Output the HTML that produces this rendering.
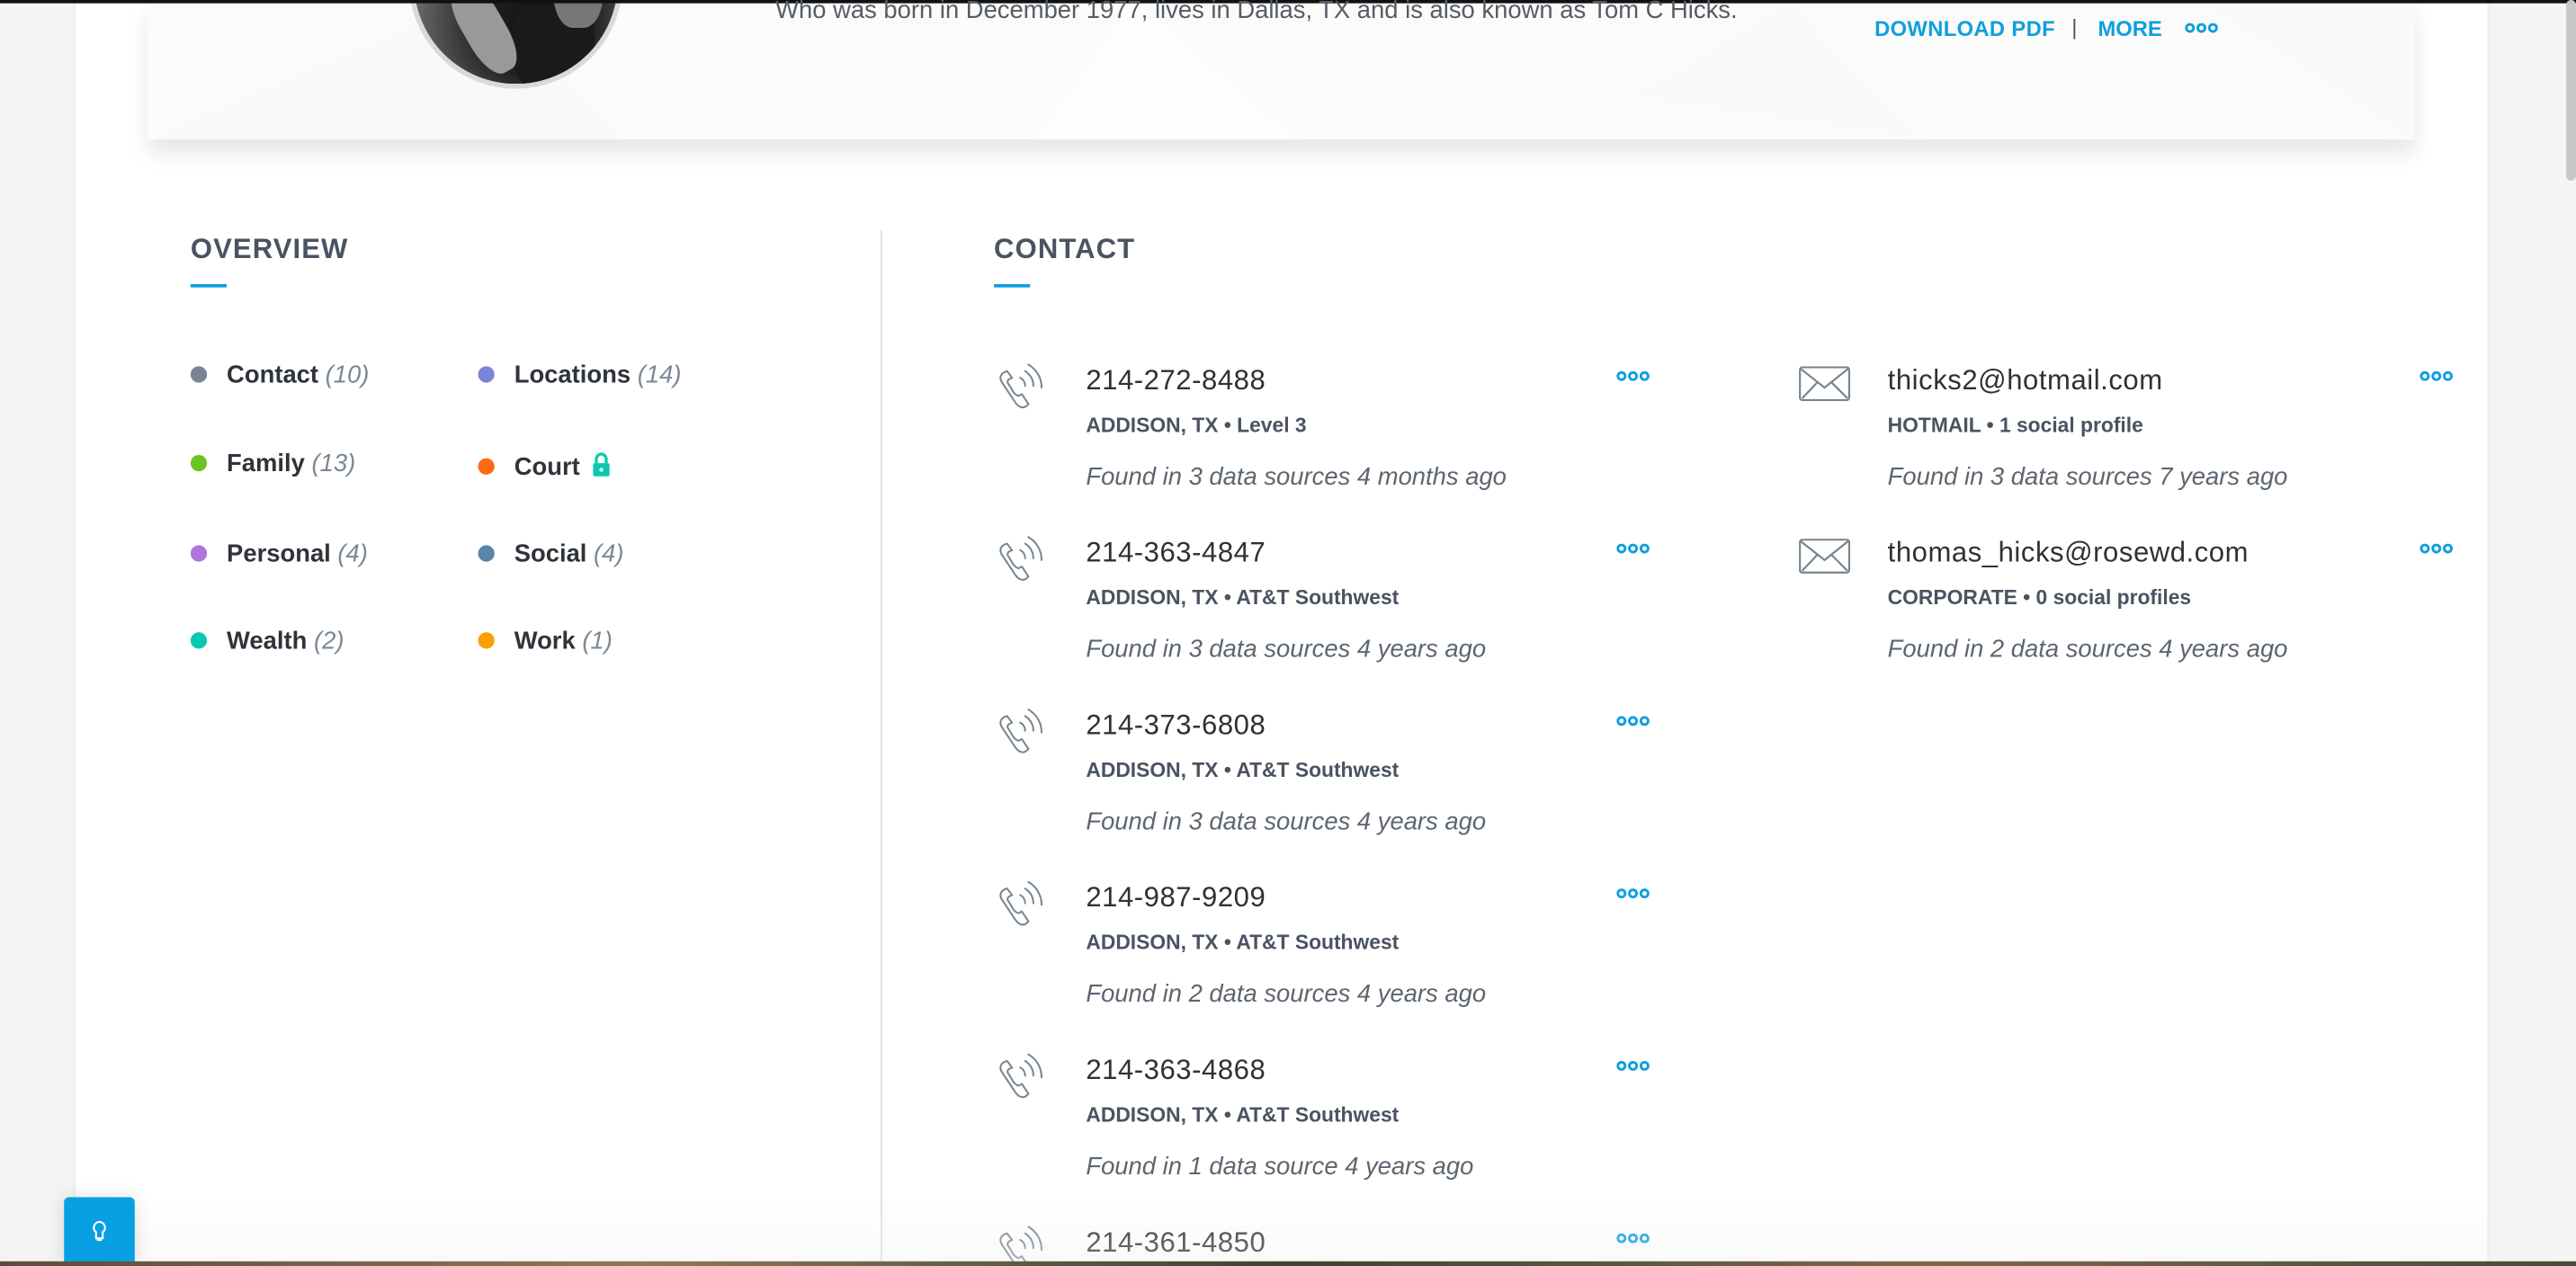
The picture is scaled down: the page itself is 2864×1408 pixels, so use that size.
<!DOCTYPE html>
<html><head><meta charset="utf-8">
<style>
html,body{margin:0;padding:0;width:2864px;height:1408px;overflow:hidden;background:#f4f4f4;}
#s{position:absolute;left:0;top:0;width:1568px;height:771px;transform:scale(1.826531);transform-origin:0 0;font-family:"Liberation Sans",sans-serif;background:#f4f4f4;overflow:hidden;}
.a{position:absolute;white-space:nowrap;}
.panel{position:absolute;left:46px;top:0;width:1468px;height:771px;background:#fff;box-shadow:0 0 3px rgba(0,0,0,.06);}
.card{position:absolute;left:90px;top:0;width:1380px;height:85px;background:#fbfbfa;box-shadow:0 8px 12px rgba(0,0,0,.10);overflow:hidden;}
.blue{color:#0e9fe0;}
.h{font-size:17px;font-weight:bold;color:#4a5361;letter-spacing:.6px;}
.ul{position:absolute;width:22px;height:2px;background:#0e9fe0;}
.dot{position:absolute;width:10px;height:10px;border-radius:50%;}
.lab{font-size:15px;font-weight:bold;color:#2f343b;}
.cnt{font-style:italic;font-weight:normal;color:#7a8896;}
.num{font-size:17px;color:#2d3237;letter-spacing:.3px;}
.sub{font-size:12.5px;font-weight:bold;color:#4a5361;}
.fnd{font-size:15px;font-style:italic;color:#5d6670;}
.dots{position:absolute;width:22px;height:6px;}
</style></head><body>
<div id="s">
<div class="panel"></div>
<div class="card">
 <svg width="1380" height="85" style="position:absolute;left:0;top:0">
  <polygon points="200,0 290,85 0,85" fill="#f9f9f8"/>
  <polygon points="600,0 700,85 540,85" fill="#fdfdfc"/>
  <polygon points="1000,0 1080,85 900,60" fill="#fafaf9"/>
  <polygon points="1250,0 1380,85 1380,0" fill="#f9f9f9"/>
 </svg>
</div>
<div style="position:absolute;left:249px;top:-76px;width:124px;height:124px;border-radius:50%;border:3px solid #d9d9d9;background:radial-gradient(circle at 60% 70%,#111 0,#222 30%,#555 55%,#888 80%);overflow:hidden;">
 <div style="position:absolute;left:60px;top:70px;width:50px;height:60px;background:#1a1a1a;border-radius:40%;"></div>
 <div style="position:absolute;left:30px;top:60px;width:25px;height:60px;background:#999;transform:rotate(-30deg);border-radius:40%;"></div>
 <div style="position:absolute;left:85px;top:40px;width:30px;height:50px;background:#777;border-radius:40%;"></div>
</div>
<div style="position:absolute;left:0;top:0;width:1568px;height:2px;background:#111;"></div>
<div class="a" style="left:472px;top:-2px;font-size:15px;color:#555c66;">Who was born in December 1977, lives in Dallas, TX and is also known as Tom C Hicks.</div>
<div class="a blue" style="left:1141px;top:10px;font-size:13px;font-weight:bold;letter-spacing:.2px;">DOWNLOAD PDF</div>
<div class="a" style="left:1261px;top:9px;font-size:13px;color:#4a5361;">|</div>
<div class="a blue" style="left:1277px;top:10px;font-size:13px;font-weight:bold;">MORE</div>
<svg class="dots" style="left:1330px;top:14px"><circle cx="3" cy="3" r="2.2" fill="none" stroke="#0e9fe0" stroke-width="1.6"/><circle cx="10" cy="3" r="2.2" fill="none" stroke="#0e9fe0" stroke-width="1.6"/><circle cx="17" cy="3" r="2.2" fill="none" stroke="#0e9fe0" stroke-width="1.6"/></svg>

<div class="a h" style="left:116px;top:142px;">OVERVIEW</div>
<div class="ul" style="left:116px;top:173px"></div>
<div style="position:absolute;left:536px;top:140px;width:1px;height:631px;background:#dedede;"></div>
<div class="a h" style="left:605px;top:142px;">CONTACT</div>
<div class="ul" style="left:605px;top:173px"></div>

<div class="dot" style="left:116px;top:223px;background:#778592"></div><div class="a lab" style="left:138px;top:220px">Contact <span class="cnt">(10)</span></div>
<div class="dot" style="left:291px;top:223px;background:#7b84d9"></div><div class="a lab" style="left:313px;top:220px">Locations <span class="cnt">(14)</span></div>
<div class="dot" style="left:116px;top:277px;background:#6bc424"></div><div class="a lab" style="left:138px;top:274px">Family <span class="cnt">(13)</span></div>
<div class="dot" style="left:291px;top:279px;background:#ff6a13"></div><div class="a lab" style="left:313px;top:276px">Court</div>
<svg class="a" style="left:360px;top:275px" width="12" height="16"><path d="M3 7V4.5a3 3 0 0 1 6 0V7" fill="none" stroke="#08c9b0" stroke-width="1.8"/><rect x="1" y="7" width="10" height="8" rx="1" fill="#08c9b0"/><circle cx="6" cy="11" r="1.2" fill="#fff"/></svg>
<div class="dot" style="left:116px;top:332px;background:#b075dc"></div><div class="a lab" style="left:138px;top:329px">Personal <span class="cnt">(4)</span></div>
<div class="dot" style="left:291px;top:332px;background:#5a84a8"></div><div class="a lab" style="left:313px;top:329px">Social <span class="cnt">(4)</span></div>
<div class="dot" style="left:116px;top:385px;background:#08c9b0"></div><div class="a lab" style="left:138px;top:382px">Wealth <span class="cnt">(2)</span></div>
<div class="dot" style="left:291px;top:385px;background:#fd9f00"></div><div class="a lab" style="left:313px;top:382px">Work <span class="cnt">(1)</span></div>

<svg width="0" height="0" style="position:absolute">
 <defs>
  <g id="ph" fill="none" stroke="#77858f" stroke-width="1.1" stroke-linecap="round">
   <path d="M6 5 C2 6 1 9 3 12 L11 24 C13 27 16 28 18 26 L19 25 L15 19 L13 20 C12 20 11 19 10 18 L7 13 C6 12 6 11 7 10 L9 9 L6 5 Z"/>
   <path d="M14 9 C16 10 17 12 17 14"/>
   <path d="M17 5 C20 7 22 10 22 14"/>
   <path d="M19 1 C24 4 27 9 27 15"/>
  </g>
  <g id="ml" fill="none" stroke="#77858f" stroke-width="1.2">
   <rect x="0.6" y="0.6" width="30" height="20" rx="1.5"/>
   <path d="M1 1.5 L15.6 13 L30 1.5 M2 19.5 L11 10 M29.5 19.5 L20 10"/>
  </g>
  <g id="dd" fill="none" stroke="#0e9fe0" stroke-width="1.6"><circle cx="3" cy="3" r="2.2"/><circle cx="10" cy="3" r="2.2"/><circle cx="17" cy="3" r="2.2"/></g>
 </defs>
</svg>

<svg class="a" style="left:607px;top:221px" width="32" height="30"><use href="#ph"/></svg>
<div class="a num" style="left:661px;top:222px">214-272-8488</div>
<div class="a sub" style="left:661px;top:252px">ADDISON, TX • Level 3</div>
<div class="a fnd" style="left:661px;top:282px">Found in 3 data sources 4 months ago</div>
<svg class="dots" style="left:984px;top:226px"><use href="#dd"/></svg>

<svg class="a" style="left:607px;top:326px" width="32" height="30"><use href="#ph"/></svg>
<div class="a num" style="left:661px;top:327px">214-363-4847</div>
<div class="a sub" style="left:661px;top:357px">ADDISON, TX • AT&amp;T Southwest</div>
<div class="a fnd" style="left:661px;top:387px">Found in 3 data sources 4 years ago</div>
<svg class="dots" style="left:984px;top:331px"><use href="#dd"/></svg>

<svg class="a" style="left:607px;top:431px" width="32" height="30"><use href="#ph"/></svg>
<div class="a num" style="left:661px;top:432px">214-373-6808</div>
<div class="a sub" style="left:661px;top:462px">ADDISON, TX • AT&amp;T Southwest</div>
<div class="a fnd" style="left:661px;top:492px">Found in 3 data sources 4 years ago</div>
<svg class="dots" style="left:984px;top:436px"><use href="#dd"/></svg>

<svg class="a" style="left:607px;top:536px" width="32" height="30"><use href="#ph"/></svg>
<div class="a num" style="left:661px;top:537px">214-987-9209</div>
<div class="a sub" style="left:661px;top:567px">ADDISON, TX • AT&amp;T Southwest</div>
<div class="a fnd" style="left:661px;top:597px">Found in 2 data sources 4 years ago</div>
<svg class="dots" style="left:984px;top:541px"><use href="#dd"/></svg>

<svg class="a" style="left:607px;top:641px" width="32" height="30"><use href="#ph"/></svg>
<div class="a num" style="left:661px;top:642px">214-363-4868</div>
<div class="a sub" style="left:661px;top:672px">ADDISON, TX • AT&amp;T Southwest</div>
<div class="a fnd" style="left:661px;top:702px">Found in 1 data source 4 years ago</div>
<svg class="dots" style="left:984px;top:646px"><use href="#dd"/></svg>

<svg class="a" style="left:607px;top:746px" width="32" height="30"><use href="#ph"/></svg>
<div class="a num" style="left:661px;top:747px">214-361-4850</div>
<svg class="dots" style="left:984px;top:751px"><use href="#dd"/></svg>

<svg class="a" style="left:1095px;top:223px" width="33" height="23"><use href="#ml"/></svg>
<div class="a num" style="left:1149px;top:222px">thicks2@hotmail.com</div>
<div class="a sub" style="left:1149px;top:252px">HOTMAIL • 1 social profile</div>
<div class="a fnd" style="left:1149px;top:282px">Found in 3 data sources 7 years ago</div>
<svg class="dots" style="left:1473px;top:226px"><use href="#dd"/></svg>

<svg class="a" style="left:1095px;top:328px" width="33" height="23"><use href="#ml"/></svg>
<div class="a num" style="left:1149px;top:327px">thomas_hicks@rosewd.com</div>
<div class="a sub" style="left:1149px;top:357px">CORPORATE • 0 social profiles</div>
<div class="a fnd" style="left:1149px;top:387px">Found in 2 data sources 4 years ago</div>
<svg class="dots" style="left:1473px;top:331px"><use href="#dd"/></svg>

<div style="position:absolute;left:46px;top:730px;width:1468px;height:38px;background:linear-gradient(rgba(255,255,255,0),rgba(240,240,240,.35));"></div>
<div style="position:absolute;left:39px;top:729px;width:43px;height:42px;background:#07a0e3;border-radius:3px 3px 0 0;box-shadow:0 0 12px rgba(0,0,0,.12);">
 <svg width="43" height="42"><path d="M21.5 15a3.5 3.5 0 0 0-2 6.3V25h4v-3.7A3.5 3.5 0 0 0 21.5 15z M20 26h3" fill="none" stroke="#fff" stroke-width="1.2"/></svg>
</div>
<div style="position:absolute;left:0;top:768px;width:1568px;height:3px;background:linear-gradient(90deg,#5a4e3a,#8a7a58,#3f4330,#7a6a4a,#4a4a38);"></div>
<div style="position:absolute;left:1562px;top:0;width:6px;height:110px;background:#c8c8c8;border-radius:3px;"></div>
</div>
</body></html>
